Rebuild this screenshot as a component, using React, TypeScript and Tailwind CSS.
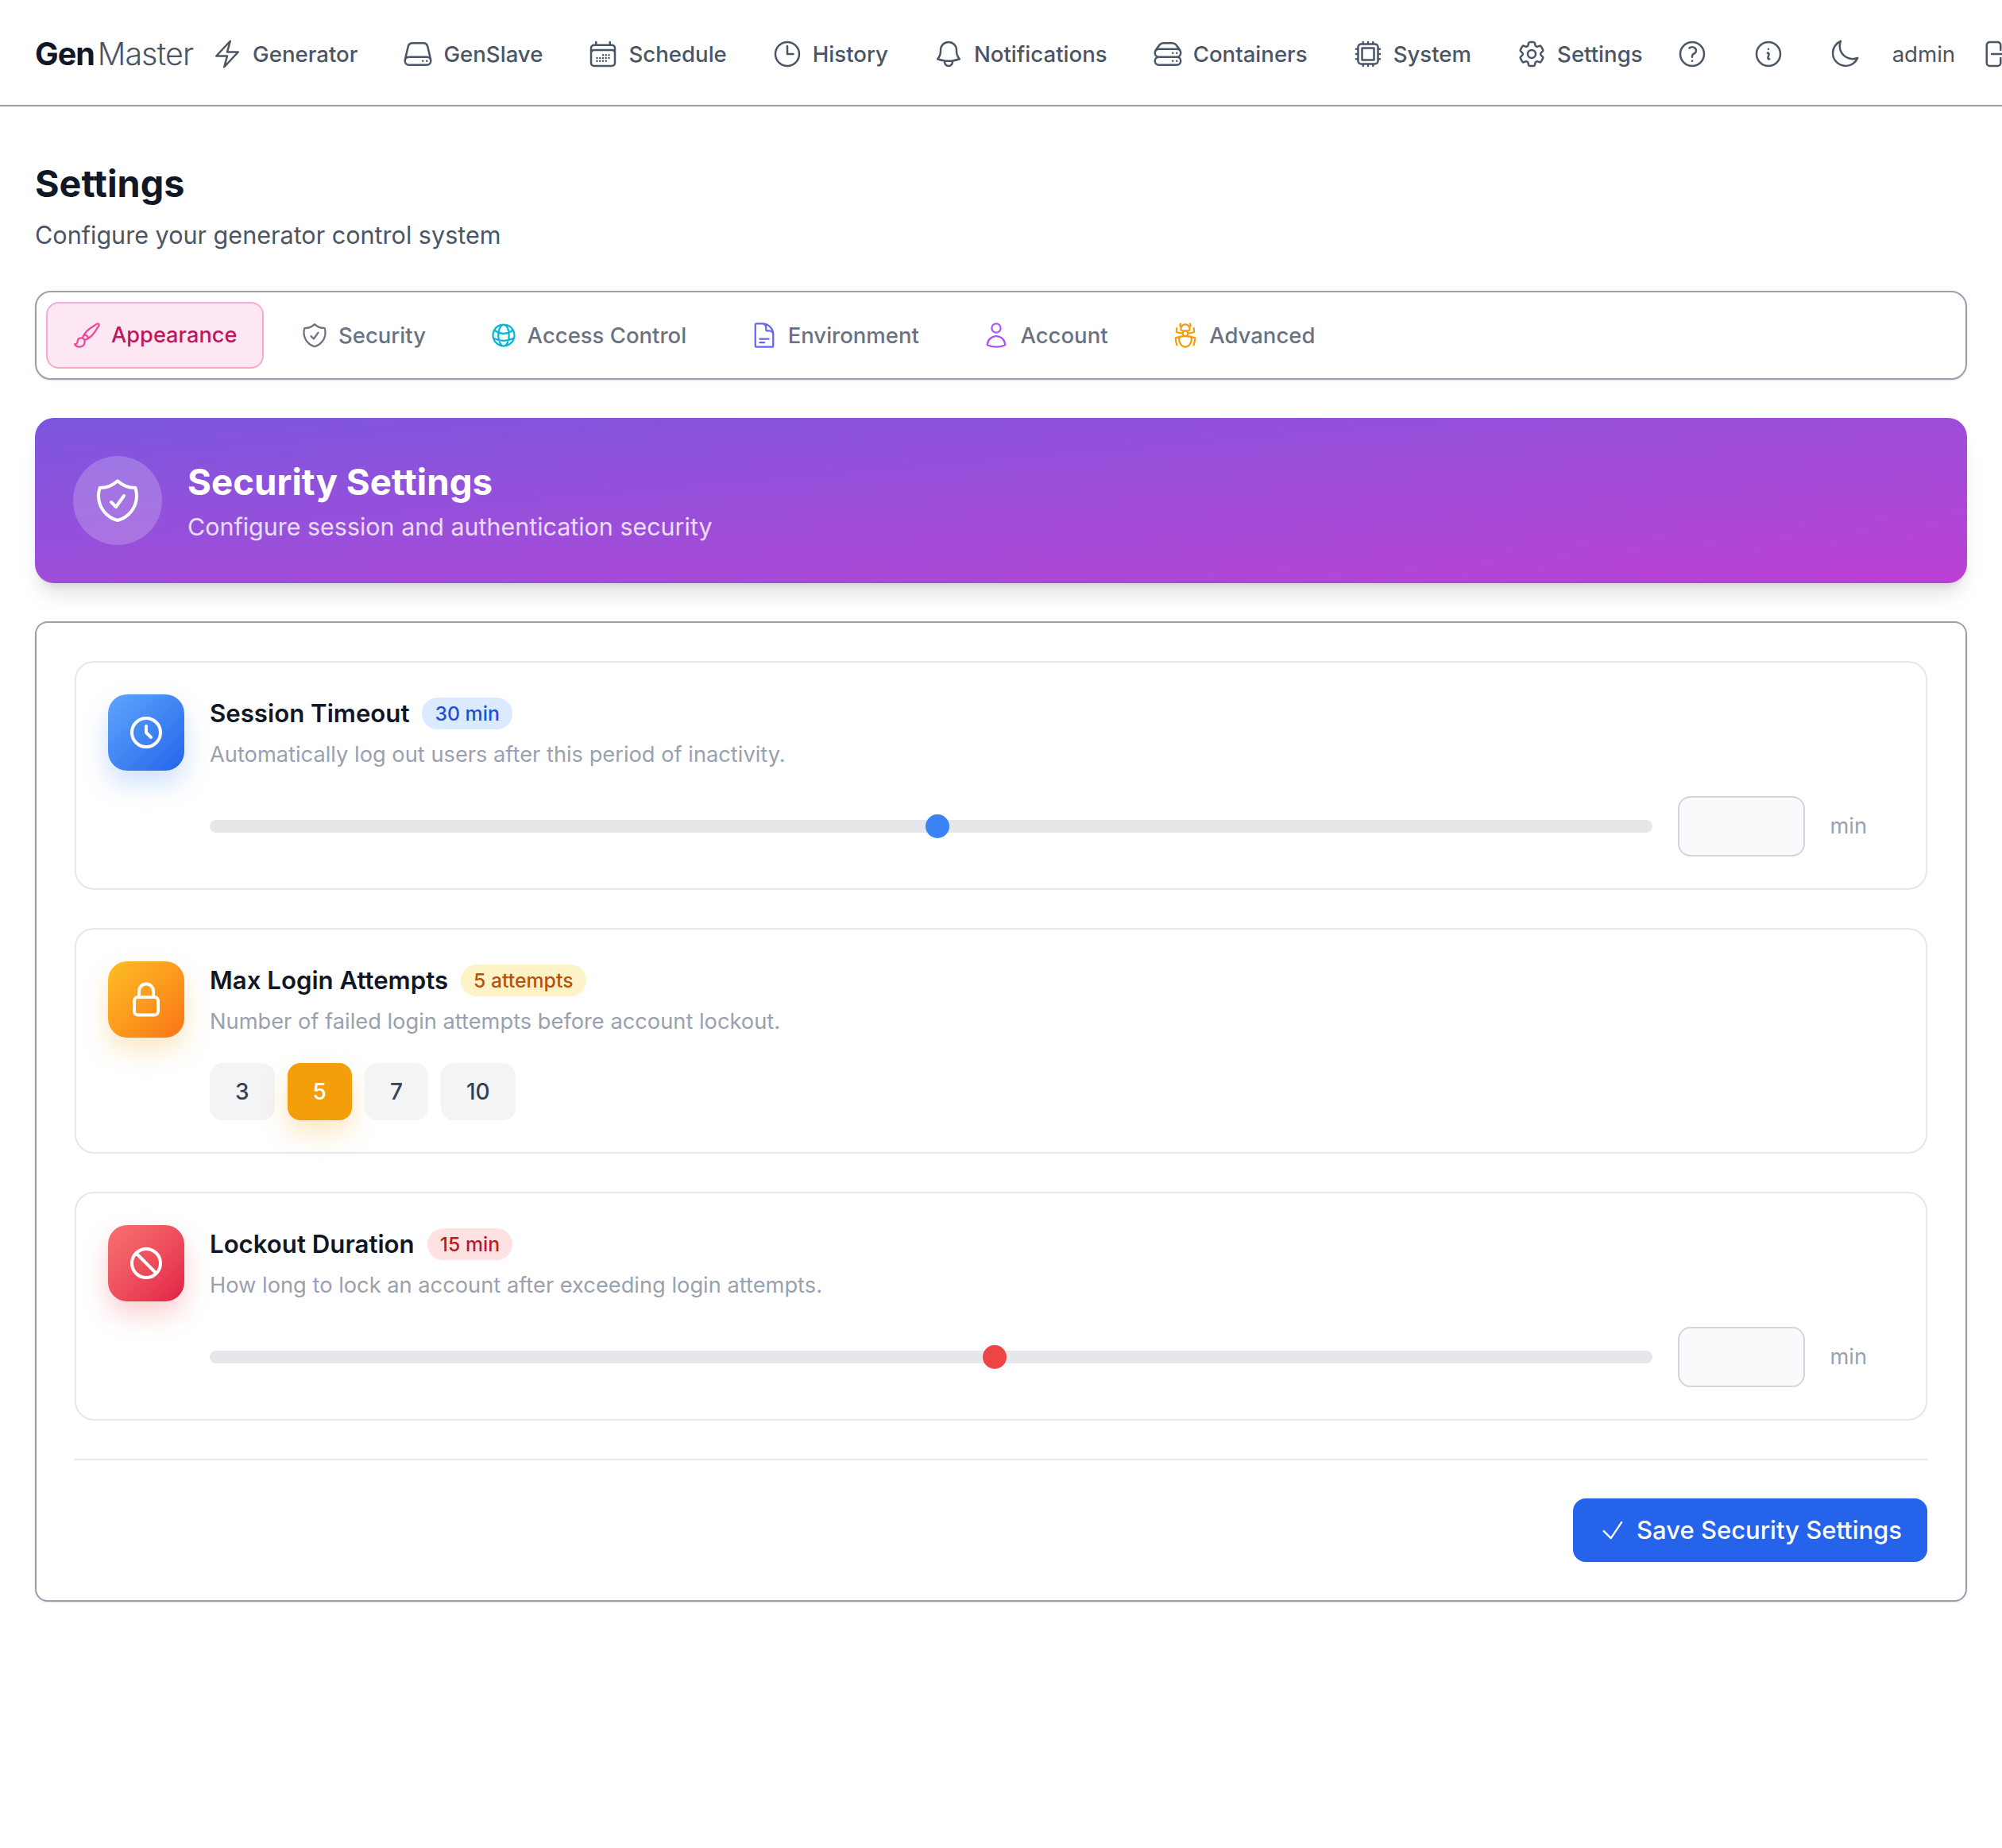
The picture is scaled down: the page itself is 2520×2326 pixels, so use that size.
import React from "react";
import { HiOutlineBan, HiOutlineClock as HiClockBold } from "react-icons/hi";
import {
  HiOutlineArrowRightOnRectangle,
  HiOutlineBell,
  HiOutlineBolt,
  HiOutlineBugAnt,
  HiOutlineCalendarDays,
  HiOutlineCheck,
  HiOutlineClock,
  HiOutlineCog6Tooth,
  HiOutlineCpuChip,
  HiOutlineDocumentText,
  HiOutlineGlobeAlt,
  HiOutlineInformationCircle,
  HiOutlineLockClosed,
  HiOutlineMoon,
  HiOutlinePaintBrush,
  HiOutlineQuestionMarkCircle,
  HiOutlineServer,
  HiOutlineServerStack,
  HiOutlineShieldCheck,
  HiOutlineUser,
} from "react-icons/hi2";

const navItems = [
  { name: "Generator", icon: HiOutlineBolt },
  { name: "GenSlave", icon: HiOutlineServer },
  { name: "Schedule", icon: HiOutlineCalendarDays },
  { name: "History", icon: HiOutlineClock },
  { name: "Notifications", icon: HiOutlineBell },
  { name: "Containers", icon: HiOutlineServerStack },
  { name: "System", icon: HiOutlineCpuChip },
  { name: "Settings", icon: HiOutlineCog6Tooth },
];

const tabs = [
  { name: "Security", icon: HiOutlineShieldCheck, color: "text-[#6b7280]" },
  { name: "Access Control", icon: HiOutlineGlobeAlt, color: "text-[#06b6d4]" },
  { name: "Environment", icon: HiOutlineDocumentText, color: "text-[#6366f1]" },
  { name: "Account", icon: HiOutlineUser, color: "text-[#a855f7]" },
  { name: "Advanced", icon: HiOutlineBugAnt, color: "text-[#f59e0b]" },
];

function SliderRow({ thumbClass }: { thumbClass: string }) {
  return (
    <div className="mt-8 flex items-center gap-8 pr-[34px]">
      <div className="relative h-4 flex-1 rounded-full bg-gray-200">
        <div className={`absolute top-1/2 h-[30px] w-[30px] -translate-y-1/2 rounded-full ${thumbClass}`} />
      </div>
      <div className="h-[76px] w-40 rounded-2xl border-2 border-gray-300 bg-gray-50" />
      <span className="text-[27.2px] leading-10 text-gray-400">min</span>
    </div>
  );
}

function SettingCard({
  icon,
  iconClass,
  title,
  badge,
  badgeClass,
  description,
  children,
}: {
  icon: React.ReactNode;
  iconClass: string;
  title: string;
  badge: string;
  badgeClass: string;
  description: string;
  children: React.ReactNode;
}) {
  return (
    <div className="flex gap-8 rounded-3xl border-2 border-gray-200 bg-white p-10">
      <div className={`flex h-24 w-24 shrink-0 items-center justify-center rounded-3xl text-white ${iconClass}`}>
        {icon}
      </div>
      <div className="min-w-0 flex-1">
        <div className="flex items-center gap-4">
          <h3 className="text-[31.2px] leading-12 font-semibold text-gray-900">{title}</h3>
          <span className={`rounded-full px-4 text-[24.8px] leading-10 font-medium ${badgeClass}`}>{badge}</span>
        </div>
        <p className="mt-2 text-[27.25px] leading-10 text-gray-400">{description}</p>
        {children}
      </div>
    </div>
  );
}

export default function App() {
  return (
    <div className="min-h-[2326px] overflow-x-hidden bg-white font-[Inter,sans-serif]">
      <header className="flex h-[134px] items-center gap-14 overflow-hidden border-b-2 border-gray-400 pt-[3px] pl-11 whitespace-nowrap">
        <div className="-mr-[33px] flex shrink-0 items-baseline gap-1 text-[39.5px] leading-[48px] tracking-tight">
          <span className="font-bold text-gray-900">Gen</span>
          <span className="font-light text-gray-600">Master</span>
        </div>
        {navItems.map((item) => (
          <a key={item.name} href="#" className="flex shrink-0 items-center gap-3 text-[27.6px] leading-10 font-medium text-gray-600">
            <item.icon className="h-10 w-10" />
            {item.name}
          </a>
        ))}
        <HiOutlineQuestionMarkCircle className="-ml-[14px] h-10 w-10 shrink-0 text-gray-600" />
        <HiOutlineInformationCircle className="h-10 w-10 shrink-0 text-gray-600" />
        <HiOutlineMoon className="h-10 w-10 shrink-0 text-gray-600" />
        <span className="-ml-4 shrink-0 text-[27.6px] leading-10 text-gray-600">admin</span>
        <HiOutlineArrowRightOnRectangle className="-ml-[25px] h-10 w-10 shrink-0 text-gray-600" />
      </header>

      <main className="px-11 pt-[72px]">
        <h1 className="text-[46.7px] leading-[50px] font-bold text-gray-900">Settings</h1>
        <p className="mt-4 text-[30.55px] leading-12 text-gray-600">Configure your generator control system</p>

        {/* Tabs */}
        <div className="mt-[46px] flex gap-2 rounded-[20px] border-2 border-gray-400 bg-white p-3 shadow-sm">
          <button className="flex items-center gap-3 rounded-2xl border-2 border-[#f9a8d4] bg-[#fce7f3] px-8 py-5 text-[27.2px] leading-10 font-medium text-[#be185d]">
            <HiOutlinePaintBrush className="h-9 w-9 text-[#ec4899]" />
            Appearance
          </button>
          {tabs.map((tab) => (
            <button key={tab.name} className="ml-[3.6px] flex items-center gap-3 rounded-2xl border-2 border-transparent px-8 py-5 text-[27.5px] leading-10 font-medium text-gray-500">
              <tab.icon className={`h-9 w-9 ${tab.color}`} />
              {tab.name}
            </button>
          ))}
        </div>

        {/* Banner */}
        <div className="mt-12 flex h-[208px] items-center gap-8 rounded-3xl bg-gradient-to-br from-[#7c56de] to-[#bc3fd5] px-12 shadow-xl">
          <div className="flex h-28 w-28 items-center justify-center rounded-full bg-white/20">
            <HiOutlineShieldCheck className="h-16 w-16 text-white" />
          </div>
          <div className="pt-1">
            <h2 className="text-[45.7px] leading-[52px] font-bold text-white">Security Settings</h2>
            <p className="mt-[10px] text-[30.45px] leading-10 text-white/80">Configure session and authentication security</p>
          </div>
        </div>

        {/* Security card */}
        <div className="mt-12 rounded-2xl border-2 border-gray-400 bg-white p-12 shadow-sm">
          <div className="flex flex-col gap-12">
            <SettingCard
              icon={<HiClockBold className="h-12 w-12" />}
              iconClass="bg-gradient-to-br from-[#60a5fa] to-[#2563eb] shadow-[0_16px_32px_rgba(59,130,246,0.25)]"
              title="Session Timeout"
              badge="30 min"
              badgeClass="bg-[#dbeafe] text-[#1d4ed8]"
              description="Automatically log out users after this period of inactivity."
            >
              <SliderRow thumbClass="left-[49.6%] bg-[#3b82f6]" />
            </SettingCard>

            <SettingCard
              icon={<HiOutlineLockClosed className="h-12 w-12" strokeWidth={2} />}
              iconClass="bg-gradient-to-br from-[#fbbf24] to-[#f97316] shadow-[0_16px_32px_rgba(245,158,11,0.25)]"
              title="Max Login Attempts"
              badge="5 attempts"
              badgeClass="bg-[#fef3c7] text-[#b45309]"
              description="Number of failed login attempts before account lockout."
            >
              <div className="mt-8 flex gap-4">
                {["3", "5", "7", "10"].map((n) => (
                  <button
                    key={n}
                    className={
                      n === "5"
                        ? "h-[72px] rounded-2xl bg-[#f59e0b] px-8 text-[28px] font-medium text-white shadow-[0_16px_32px_rgba(245,158,11,0.25)]"
                        : "h-[72px] rounded-2xl bg-gray-100 px-8 text-[28px] font-medium text-gray-700"
                    }
                  >
                    {n}
                  </button>
                ))}
              </div>
            </SettingCard>

            <SettingCard
              icon={<HiOutlineBan className="h-12 w-12" />}
              iconClass="bg-gradient-to-br from-[#f87171] to-[#e11d48] shadow-[0_16px_32px_rgba(239,68,68,0.25)]"
              title="Lockout Duration"
              badge="15 min"
              badgeClass="bg-[#fee2e2] text-[#b91c1c]"
              description="How long to lock an account after exceeding login attempts."
            >
              <SliderRow thumbClass="left-[53.6%] bg-[#ef4444]" />
            </SettingCard>
          </div>

          <div className="mt-12 flex justify-end border-t-2 border-gray-200 pt-12">
            <button className="flex h-20 items-center gap-3 rounded-2xl bg-[#2563eb] px-8 text-[31px] font-medium text-white">
              <HiOutlineCheck className="h-9 w-9" />
              Save Security Settings
            </button>
          </div>
        </div>
      </main>
    </div>
  );
}
